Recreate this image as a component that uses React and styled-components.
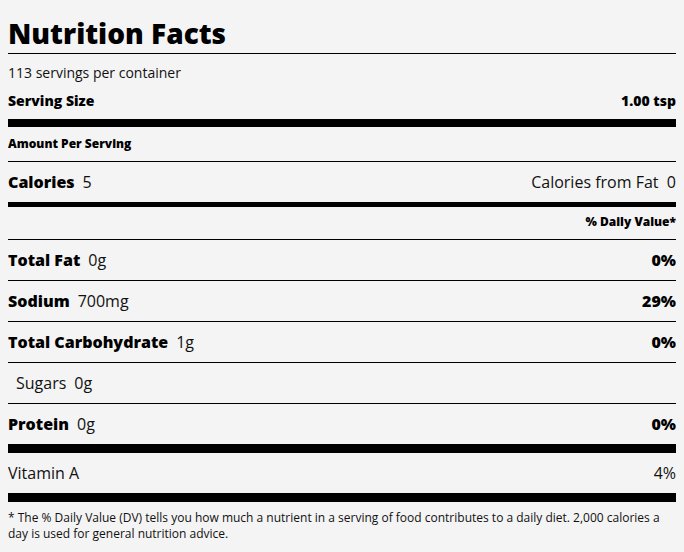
import React from "react";
import styled, { createGlobalStyle } from "styled-components";

const GlobalStyle = createGlobalStyle`
  body {
    margin: 8px;
    background: #f4f4f4;
    font-family: "Open Sans", "Liberation Sans", sans-serif;
    color: #111;
  }
`;

const Label = styled.section`
  width: 668px;
`;

const Title = styled.h1`
  margin: 5px 0 0;
  font-size: 28px;
  font-weight: 800;
  line-height: 40px;
  color: #000;
  border-bottom: 1px solid #000;
`;

const Servings = styled.div`
  font-size: 14px;
  line-height: 20px;
  padding-top: 9px;
`;

const Row = styled.div`
  display: flex;
  justify-content: ${p => (p.end ? "flex-end" : "space-between")};
  align-items: center;
  font-size: ${p => (p.small ? "12px" : p.mid ? "14px" : "16px")};
  line-height: ${p => (p.small ? "16px" : "22px")};
  padding: ${p => p.pad || "9px 0"};
  padding-left: ${p => (p.indent ? "8px" : "0")};
  border-bottom: ${p => p.bar || 1}px solid #000;
`;

const Bold = styled.b`
  font-weight: 800;
  color: #000;
`;

const Amount = styled.span`
  margin-left: 8px;
`;

const Footnote = styled.p`
  margin: 8px 0 0;
  font-size: 12px;
  line-height: 16px;
`;

const nutrients = [
  { name: "Total Fat", amount: "0g", dv: "0%" },
  { name: "Sodium", amount: "700mg", dv: "29%" },
  { name: "Total Carbohydrate", amount: "1g", dv: "0%" },
  { name: "Sugars", amount: "0g", sub: true },
  { name: "Protein", amount: "0g", dv: "0%", bar: 9 },
];

export default function App() {
  return (
    <>
      <GlobalStyle />
      <Label>
        <Title>Nutrition Facts</Title>
        <Servings>113 servings per container</Servings>
        <Row mid pad="7px 0" bar={8}>
          <Bold>Serving Size</Bold>
          <Bold>1.00 tsp</Bold>
        </Row>
        <Row small>
          <Bold>Amount Per Serving</Bold>
        </Row>
        <Row bar={5}>
          <span>
            <Bold>Calories</Bold>
            <Amount>5</Amount>
          </span>
          <span>Calories from Fat&nbsp; 0</span>
        </Row>
        <Row small end pad="7px 0 9px">
          <Bold>% Daily Value*</Bold>
        </Row>
        {nutrients.map(n => (
          <Row key={n.name} bar={n.bar} indent={n.sub}>
            <span>
              {n.sub ? n.name : <Bold>{n.name}</Bold>}
              <Amount>{n.amount}</Amount>
            </span>
            {n.dv && <Bold>{n.dv}</Bold>}
          </Row>
        ))}
        <Row bar={9}>
          <span>Vitamin A</span>
          <span>4%</span>
        </Row>
        <Footnote>
          * The % Daily Value (DV) tells you how much a nutrient in a serving of
          food contributes to a daily diet. 2,000 calories a day is used for
          general nutrition advice.
        </Footnote>
      </Label>
    </>
  );
}
